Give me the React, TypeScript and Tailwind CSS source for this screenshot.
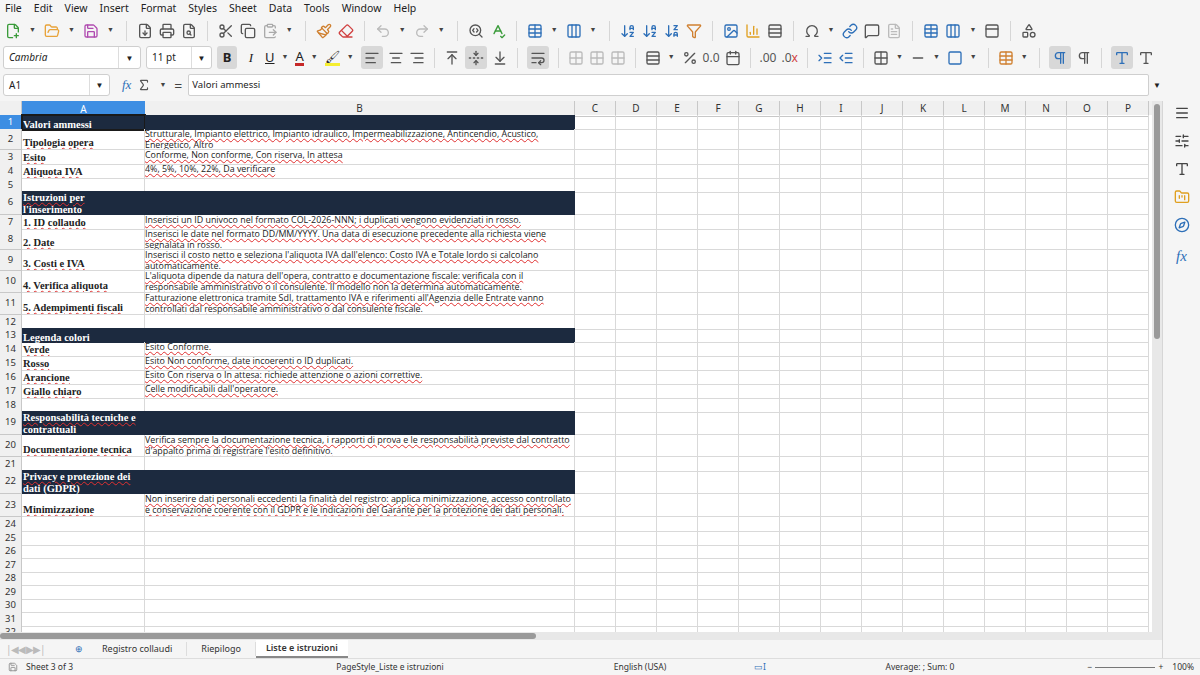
import React from "react";
import {
  FilePlus2, FolderOpen, Save, FileDown, Printer, FileSearch, Scissors, Copy, ClipboardPaste, Paintbrush, Eraser,
  Undo2, Redo2, SearchCode, SpellCheck, Table, Columns3, ArrowDownAZ, ArrowDownZA, Filter, Image, BarChart3,
  Omega, Link, MessageSquare, FileText, Rows3, PanelTop, Shapes, AlignLeft, AlignCenter, AlignRight,
  ArrowUpToLine, FoldVertical, ArrowDownToLine, WrapText, Percent, Calendar, IndentIncrease, IndentDecrease,
  Grid2x2, Minus, Square, Menu, SlidersHorizontal, Type, FolderKanban, Compass, Sigma, Pilcrow,
} from "lucide-react";

const ico = "w-[16px] h-[16px] text-[#555]";
const Dd = () => <span className="text-[7px] text-[#444] mx-[2px]">▼</span>;
const Sep = () => <div className="w-px h-[20px] bg-[#d6d6d6] mx-[4px]" />;

const rows: { h: number; a?: string; b?: string; hd?: boolean }[] = [
  { h: 14, a: "Valori ammessi", hd: true },
  { h: 21, a: "Tipologia opera", b: "Strutturale, Impianto elettrico, Impianto idraulico, Impermeabilizzazione, Antincendio, Acustico, Energetico, Altro" },
  { h: 14, a: "Esito", b: "Conforme, Non conforme, Con riserva, In attesa" },
  { h: 14, a: "Aliquota IVA", b: "4%, 5%, 10%, 22%, Da verificare" },
  { h: 13 },
  { h: 24, a: "Istruzioni per l'inserimento", hd: true },
  { h: 14, a: "1. ID collaudo", b: "Inserisci un ID univoco nel formato COL-2026-NNN; i duplicati vengono evidenziati in rosso." },
  { h: 21, a: "2. Date", b: "Inserisci le date nel formato DD/MM/YYYY. Una data di esecuzione precedente alla richiesta viene segnalata in rosso." },
  { h: 21, a: "3. Costi e IVA", b: "Inserisci il costo netto e seleziona l'aliquota IVA dall'elenco: Costo IVA e Totale lordo si calcolano automaticamente." },
  { h: 22, a: "4. Verifica aliquota", b: "L'aliquota dipende da natura dell'opera, contratto e documentazione fiscale: verificala con il responsabile amministrativo o il consulente. Il modello non la determina automaticamente." },
  { h: 22, a: "5. Adempimenti fiscali", b: "Fatturazione elettronica tramite SdI, trattamento IVA e riferimenti all'Agenzia delle Entrate vanno controllati dal responsabile amministrativo o dal consulente fiscale." },
  { h: 13 },
  { h: 14, a: "Legenda colori", hd: true },
  { h: 14, a: "Verde", b: "Esito Conforme." },
  { h: 14, a: "Rosso", b: "Esito Non conforme, date incoerenti o ID duplicati." },
  { h: 14, a: "Arancione", b: "Esito Con riserva o In attesa: richiede attenzione o azioni correttive." },
  { h: 14, a: "Giallo chiaro", b: "Celle modificabili dall'operatore." },
  { h: 13 },
  { h: 24, a: "Responsabilità tecniche e contrattuali", hd: true },
  { h: 22, a: "Documentazione tecnica", b: "Verifica sempre la documentazione tecnica, i rapporti di prova e le responsabilità previste dal contratto d'appalto prima di registrare l'esito definitivo." },
  { h: 13 },
  { h: 24, a: "Privacy e protezione dei dati (GDPR)", hd: true },
  { h: 23, a: "Minimizzazione", b: "Non inserire dati personali eccedenti la finalità del registro: applica minimizzazione, accesso controllato e conservazione coerente con il GDPR e le indicazioni del Garante per la protezione dei dati personali." },
  ...Array.from({ length: 9 }, () => ({ h: 13.5 })),
];
const extra = ["C", "D", "E", "F", "G", "H", "I", "J", "K", "L", "M", "N", "O", "P"];
const squig = "underline decoration-wavy decoration-[#e03030] decoration-[1px] underline-offset-[1px]";
const serif = { fontFamily: '"Liberation Serif", serif' };

export default function App() {
  return (
    <div className="w-[1200px] h-[675px] overflow-hidden bg-[#f5f5f5] flex flex-col text-[#222]" style={{ fontFamily: '"Noto Sans", sans-serif' }}>
      <div className="h-[17px] flex items-center gap-[12px] px-[5px] text-[10.5px]">
        {["File", "Edit", "View", "Insert", "Format", "Styles", "Sheet", "Data", "Tools", "Window", "Help"].map(m => <span key={m}>{m}</span>)}
      </div>
      <div className="h-[27px] flex items-center px-[5px] gap-[6px]">
        <FilePlus2 className="w-[16px] h-[16px] text-[#3a9b3a]" /><Dd />
        <FolderOpen className="w-[16px] h-[16px] text-[#e8a33a]" /><Dd />
        <Save className="w-[16px] h-[16px] text-[#b04bb0]" /><Dd /><Sep />
        <FileDown className={ico} /><Printer className={ico} /><FileSearch className={ico} /><Sep />
        <Scissors className={ico} /><Copy className={ico} /><ClipboardPaste className="w-[16px] h-[16px] text-[#aaa]" /><Dd /><Sep />
        <Paintbrush className="w-[16px] h-[16px] text-[#d08030]" /><Eraser className="w-[16px] h-[16px] text-[#d04040]" /><Sep />
        <Undo2 className="w-[16px] h-[16px] text-[#bbb]" /><Dd /><Redo2 className="w-[16px] h-[16px] text-[#bbb]" /><Dd /><Sep />
        <SearchCode className={ico} /><SpellCheck className="w-[16px] h-[16px] text-[#3a9b3a]" /><Sep />
        <Table className="w-[16px] h-[16px] text-[#2d6fb8]" /><Dd /><Columns3 className="w-[16px] h-[16px] text-[#2d6fb8]" /><Dd /><Sep />
        <ArrowDownAZ className="w-[16px] h-[16px] text-[#2d6fb8]" /><ArrowDownAZ className="w-[16px] h-[16px] text-[#2d6fb8]" /><ArrowDownZA className="w-[16px] h-[16px] text-[#2d6fb8]" /><Filter className="w-[16px] h-[16px] text-[#d08030]" /><Sep />
        <Image className="w-[16px] h-[16px] text-[#2d6fb8]" /><BarChart3 className="w-[16px] h-[16px] text-[#e0a020]" /><Rows3 className={ico} /><Sep />
        <Omega className={ico} /><Dd /><Link className="w-[16px] h-[16px] text-[#2d6fb8]" /><MessageSquare className={ico} /><FileText className="w-[16px] h-[16px] text-[#bbb]" /><Sep />
        <Table className="w-[16px] h-[16px] text-[#2d6fb8]" /><Columns3 className="w-[16px] h-[16px] text-[#2d6fb8]" /><Dd /><PanelTop className={ico} /><Sep />
        <Shapes className={ico} />
      </div>
      <div className="h-[27px] flex items-center px-[3px] gap-[5px]">
        <div className="w-[138px] h-[23px] bg-white border border-[#cfcfcf] rounded-[3px] flex items-center text-[10px] italic pl-[5px]">
          <span className="flex-1">Cambria</span><span className="w-[22px] border-l border-[#ddd] h-full flex items-center justify-center not-italic text-[8px]">▼</span>
        </div>
        <div className="w-[66px] h-[23px] bg-white border border-[#cfcfcf] rounded-[3px] flex items-center text-[10px] pl-[5px]">
          <span className="flex-1">11 pt</span><span className="w-[20px] border-l border-[#ddd] h-full flex items-center justify-center text-[8px]">▼</span>
        </div>
        <span className="w-[20px] h-[23px] bg-[#d8d8d8] rounded-[3px] flex items-center justify-center text-[13px] font-bold">B</span>
        <span className="w-[18px] text-center text-[13px] italic" style={serif}>I</span>
        <span className="text-[13px] underline">U</span><Dd />
        <span className="text-[13px] border-b-[3px] border-[#c62828] leading-[13px]">A</span><Dd />
        <span className="text-[12px] border-b-[3px] border-[#f5ee30] leading-[13px]">🖌</span><Dd />
        <span className="w-[22px] h-[23px] bg-[#d8d8d8] rounded-[3px] flex items-center justify-center"><AlignLeft className={ico} /></span>
        <AlignCenter className={ico} /><AlignRight className={ico} /><Sep />
        <ArrowUpToLine className={ico} /><span className="w-[22px] h-[23px] bg-[#d8d8d8] rounded-[3px] flex items-center justify-center"><FoldVertical className={ico} /></span><ArrowDownToLine className={ico} /><Sep />
        <span className="w-[22px] h-[23px] bg-[#d8d8d8] rounded-[3px] flex items-center justify-center"><WrapText className={ico} /></span><Sep />
        <Grid2x2 className="w-[16px] h-[16px] text-[#bbb]" /><Grid2x2 className="w-[16px] h-[16px] text-[#bbb]" /><Grid2x2 className="w-[16px] h-[16px] text-[#bbb]" /><Sep />
        <Rows3 className={ico} /><Dd /><Percent className={ico} /><span className="text-[12px] text-[#555]">0.0</span><Calendar className={ico} /><Sep />
        <span className="text-[12px] text-[#555]">.00</span><span className="text-[12px] text-[#555]">.0<span className="text-[#d04040]">x</span></span><Sep />
        <IndentIncrease className="w-[16px] h-[16px] text-[#2d6fb8]" /><IndentDecrease className="w-[16px] h-[16px] text-[#2d6fb8]" /><Sep />
        <Grid2x2 className={ico} /><Dd /><Minus className={ico} /><Dd /><Square className="w-[16px] h-[16px] text-[#2d6fb8]" /><Dd /><Sep />
        <Table className="w-[16px] h-[16px] text-[#d08030]" /><Dd /><Sep />
        <span className="w-[22px] h-[23px] bg-[#d8d8d8] rounded-[3px] flex items-center justify-center"><Pilcrow className="w-[16px] h-[16px] text-[#2d6fb8]" /></span><Pilcrow className={ico} /><Sep />
        <span className="w-[22px] h-[23px] bg-[#d8d8d8] rounded-[3px] flex items-center justify-center"><Type className="w-[16px] h-[16px] text-[#2d6fb8]" /></span><Type className={ico} />
      </div>
      <div className="h-[26px] flex items-center px-[3px] gap-[6px] mt-[1px]">
        <div className="w-[107px] h-[22px] bg-white border border-[#cfcfcf] rounded-[3px] flex items-center text-[10px] pl-[5px]">
          <span className="flex-1">A1</span><span className="w-[20px] border-l border-[#ddd] h-full flex items-center justify-center text-[8px]">▼</span>
        </div>
        <span className="italic text-[#2d6fb8] text-[13px] ml-[6px]" style={serif}>fx</span>
        <Sigma className="w-[14px] h-[14px] text-[#555]" /><Dd />
        <span className="text-[14px] text-[#444]">=</span>
        <div className="flex-1 h-[22px] bg-white border border-[#cfcfcf] rounded-[2px] flex items-center text-[9.5px] pl-[3px]">Valori ammessi</div>
        <span className="text-[8px] mr-[36px] ml-[-2px]">▼</span>
      </div>
      <div className="h-[3px]" />
      <div className="flex flex-1 min-h-0">
        <div className="w-[1162px] flex flex-col min-h-0">
          <div className="flex flex-1 min-h-0">
            <div className="w-[1152px] overflow-hidden bg-white">
              <div className="grid grid-cols-[22px_123px_430px_repeat(14,41px)] h-[14px] bg-[#f0f0f0] text-[10px] text-[#333]">
                <div className="border-r border-b border-[#c8c8c8]" />
                <div className="bg-[#3d8ee3] text-white flex items-center justify-center">A</div>
                {["B", ...extra].map(c => <div key={c} className="border-r border-b border-[#c8c8c8] flex items-center justify-center">{c}</div>)}
              </div>
              {rows.map((r, i) => (
                <div key={i} className="grid grid-cols-[22px_123px_430px_repeat(14,41px)]" style={{ height: r.h }}>
                  <div className={`flex items-center justify-center text-[9.5px] border-r border-b border-[#c8c8c8] ${i === 0 ? "bg-[#3d8ee3] text-white" : "bg-[#f0f0f0] text-[#333]"}`}>{i + 1}</div>
                  {r.hd ? (
                    <>
                      <div className={`bg-[#1c2a3f] text-white font-bold text-[10.5px] leading-[11.5px] flex items-end px-[1px] overflow-hidden ${i === 0 ? "outline-2 outline-[#1a1a1a] -outline-offset-1" : ""}`} style={serif}>
                        <span className={squig}>{r.a}</span>
                      </div>
                      <div className="bg-[#1c2a3f] border-b border-[#1c2a3f]" />
                    </>
                  ) : (
                    <>
                      <div className="border-r border-b border-[#d9d9d9] font-bold text-[10.5px] leading-[12px] flex items-end px-[1px] overflow-hidden whitespace-nowrap" style={serif}>
                        {r.a && <span className={squig}>{r.a}</span>}
                      </div>
                      <div className="border-r border-b border-[#d9d9d9] text-[8.9px] leading-[10.5px] flex items-start overflow-hidden" style={{ fontFamily: '"Open Sans", sans-serif' }}>
                        {r.b && <span className={squig}>{r.b}</span>}
                      </div>
                    </>
                  )}
                  {extra.map(c => <div key={c} className="border-r border-b border-[#d9d9d9]" />)}
                </div>
              ))}
            </div>
            <div className="w-[10px] bg-[#e8e8e8] flex justify-center pt-[3px]">
              <div className="w-[6px] h-[235px] bg-[#9a9a9a] rounded-[3px]" />
            </div>
          </div>
          <div className="h-[8px] bg-[#e8e8e8] flex items-center">
            <div className="w-[536px] h-[6px] bg-[#9a9a9a] rounded-[3px] ml-[0px]" />
          </div>
          <div className="h-[18px] flex items-center text-[9px] text-[#333]">
            <span className="text-[#bbb] text-[10px] tracking-[-1px] w-[70px] pl-[6px]">|◀◀ ▶▶|</span>
            <span className="text-[#2d6fb8] w-[18px] text-center">⊕</span>
            <span className="px-[14px] border-r border-[#ddd]">Registro collaudi</span>
            <span className="px-[14px] border-r border-[#ddd]">Riepilogo</span>
            <span className="px-[10px] h-full bg-white flex items-center font-semibold border-b-2 border-[#888]">Liste e istruzioni</span>
          </div>
        </div>
        <div className="w-[38px] border-l border-[#d6d6d6] flex flex-col items-center pt-[4px] gap-[12px]">
          <Menu className="w-[16px] h-[16px] text-[#444]" />
          <SlidersHorizontal className="w-[16px] h-[16px] text-[#444]" />
          <Type className="w-[16px] h-[16px] text-[#444]" />
          <FolderKanban className="w-[16px] h-[16px] text-[#e0a020]" />
          <Compass className="w-[16px] h-[16px] text-[#2d6fb8]" />
          <span className="italic text-[#2d6fb8] text-[15px]" style={serif}>fx</span>
        </div>
      </div>
      <div className="h-[17px] flex items-center text-[8.5px] text-[#333] border-t border-[#ddd]">
        <span className="w-[190px] pl-[8px] flex items-center gap-[8px]"><Save className="w-[10px] h-[10px] text-[#888]" />Sheet 3 of 3</span>
        <span className="w-[400px] text-center">PageStyle_Liste e istruzioni</span>
        <span className="w-[100px] text-center">English (USA)</span>
        <span className="w-[140px] text-center text-[#2d6fb8]">▭I</span>
        <span className="w-[180px] text-center">Average: ; Sum: 0</span>
        <span className="flex-1 flex items-center gap-[3px] justify-end pr-[6px]">− <span className="w-[60px] h-px bg-[#777]" /> + <span className="ml-[6px]">100%</span></span>
      </div>
    </div>
  );
}
